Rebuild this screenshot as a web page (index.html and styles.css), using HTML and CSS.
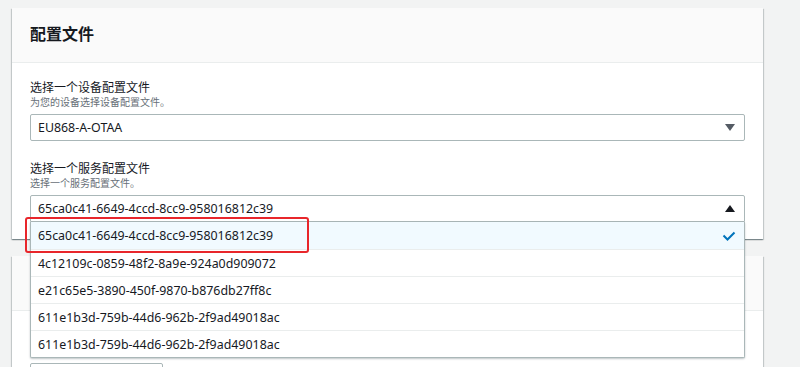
FILE: index.html
```
<!DOCTYPE html>
<html lang="zh-CN">
<head>
  <meta charset="UTF-8" />
  <title>配置文件</title>
  <link rel="stylesheet" href="styles.css">
</head>
<body>
  <!-- 配置文件 卡片 -->
  <div class="card card-top">
    <div class="card-header">
      <h2>配置文件</h2>
    </div>
    <div class="card-body">
      <div class="field">
        <div class="label">选择一个设备配置文件</div>
        <div class="hint">为您的设备选择设备配置文件。</div>
        <div class="select">
          <span>EU868-A-OTAA</span>
          <span class="caret down"></span>
        </div>
      </div>

      <div class="field">
        <div class="label">选择一个服务配置文件</div>
        <div class="hint">选择一个服务配置文件。</div>
        <div class="select-wrap">
          <div class="select open">
            <span>65ca0c41-6649-4ccd-8cc9-958016812c39</span>
            <span class="caret up"></span>
          </div>
          <ul class="options">
            <li class="selected">
              <span>65ca0c41-6649-4ccd-8cc9-958016812c39</span>
              <svg class="check" width="14" height="10" viewBox="0 0 14 10">
                <path d="M1.5 4.5 L5.5 8.5 L12.5 1.5" fill="none" stroke="#0073bb" stroke-width="2" />
              </svg>
            </li>
            <li>4c12109c-0859-48f2-8a9e-924a0d909072</li>
            <li>e21c65e5-3890-450f-9870-b876db27ff8c</li>
            <li>611e1b3d-759b-44d6-962b-2f9ad49018ac</li>
            <li>611e1b3d-759b-44d6-962b-2f9ad49018ac</li>
          </ul>
          <div class="highlight"></div>
        </div>
      </div>
    </div>
  </div>

  <!-- 下方卡片 (被下拉框遮挡) -->
  <div class="card">
    <div class="card-header"></div>
    <div class="card-body card-body-low">
      <div class="input-stub"></div>
    </div>
  </div>
</body>
</html>
```

FILE: styles.css
```
/* ---------- 기본 ---------- */
html, body {
  height: 100%;
  overflow: hidden;
}

body {
  margin: 0;
  padding: 8px 37px 0 12px;
  background: #f2f3f3;
  font-family: "Noto Sans", "Noto Sans CJK SC", sans-serif;
  color: #16191f;
}

/* ---------- 카드 ---------- */
.card {
  position: relative;
  background: #fff;
  box-shadow: 0 1px 1px 0 rgba(0, 28, 36, 0.3), 1px 1px 1px 0 rgba(0, 28, 36, 0.15), -1px 1px 1px 0 rgba(0, 28, 36, 0.15);
  margin-bottom: 17px;
}

.card-top {
  z-index: 2;
}

.card-header {
  height: 54px;
  padding: 0 18px;
  background: #fafafa;
  border-bottom: 1px solid #eaeded;
  display: flex;
  align-items: center;
}

.card-header h2 {
  margin: 0;
  font-size: 16px;
  font-weight: 700;
  line-height: 20px;
  margin-top: -2px;
}

.card-body {
  padding: 18px 18px 17px;
}

.card-body-low {
  padding-top: 52px;
  height: 0;
}

/* ---------- 폼 ---------- */
.field + .field {
  margin-top: 21px;
}

.label {
  font-size: 12px;
  line-height: 14px;
}

.hint {
  font-size: 10px;
  line-height: 14px;
  color: #687078;
}

.select {
  box-sizing: border-box;
  height: 27px;
  margin-top: 5px;
  padding: 0 9px 0 7px;
  border: 1px solid #aab7b8;
  border-radius: 2px;
  background: #fff;
  font-size: 12.4px;
  display: flex;
  align-items: center;
  justify-content: space-between;
}

.caret {
  width: 0;
  height: 0;
  border-left: 5px solid transparent;
  border-right: 5px solid transparent;
}

.caret.down {
  border-top: 7px solid #545b64;
}

.caret.up {
  border-bottom: 7px solid #16191f;
}

/* ---------- 드롭다운 ---------- */
.select-wrap {
  position: relative;
}

.select.open {
  border-radius: 2px 2px 0 0;
}

.options {
  position: absolute;
  top: 100%;
  left: 0;
  right: 0;
  z-index: 5;
  margin: 0;
  padding: 0;
  list-style: none;
  background: #fff;
  border: 1px solid #aab7b8;
  border-top: none;
  border-radius: 0 0 2px 2px;
  box-shadow: 0 1px 2px rgba(0, 28, 36, 0.25);
}

.options li {
  box-sizing: border-box;
  height: 27px;
  padding: 0 7px;
  border-top: 1px solid #eaeded;
  font-size: 12.4px;
  display: flex;
  align-items: center;
  justify-content: space-between;
}

.options li:first-child {
  border-top: none;
}

.options li.selected {
  background: #f1faff;
}

.check {
  margin-right: 1px;
}

/* 강조 박스 */
.highlight {
  position: absolute;
  z-index: 6;
  left: -5px;
  top: 22px;
  width: 284px;
  height: 36px;
  box-sizing: border-box;
  border: 2px solid #e8262b;
  border-radius: 3px;
}

.input-stub {
  width: 131px;
  height: 27px;
  border: 1px solid #aab7b8;
  border-radius: 2px;
}
```
